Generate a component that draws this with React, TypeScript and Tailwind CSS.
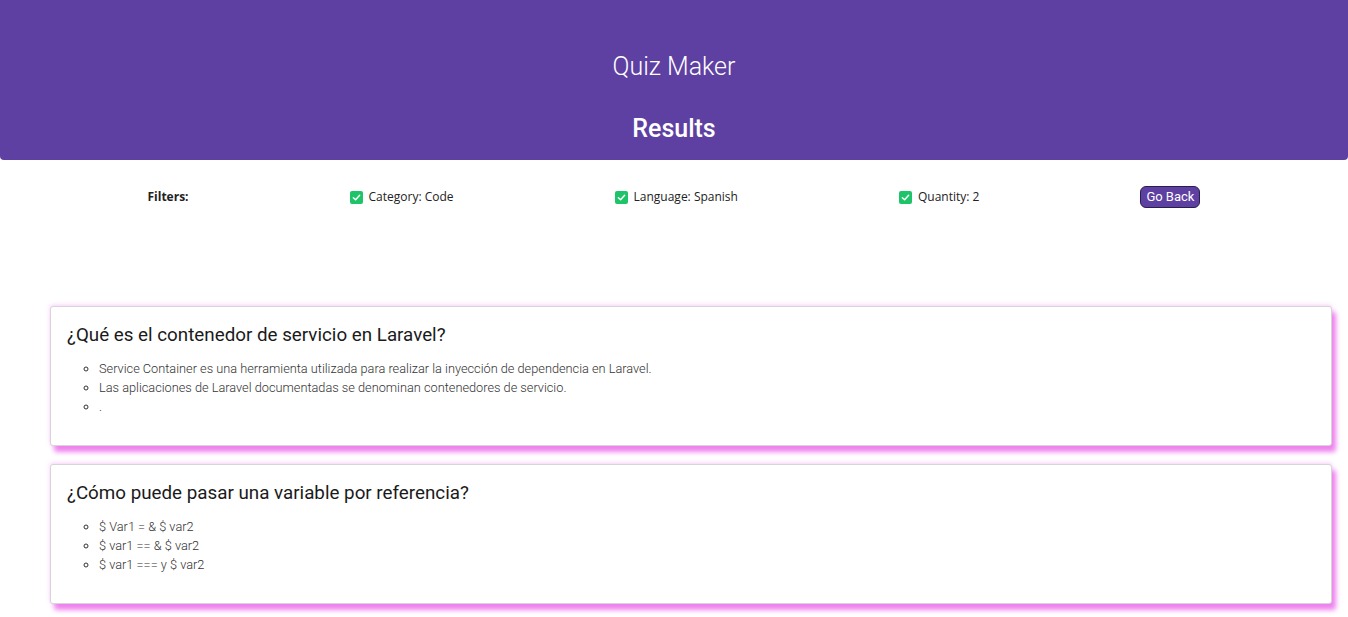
import React from "react";

const questions = [
  {
    title: "¿Qué es el contenedor de servicio en Laravel?",
    answers: [
      "Service Container es una herramienta utilizada para realizar la inyección de dependencia en Laravel.",
      "Las aplicaciones de Laravel documentadas se denominan contenedores de servicio.",
      ".",
    ],
  },
  {
    title: "¿Cómo puede pasar una variable por referencia?",
    answers: ["$ Var1 = & $ var2", "$ var1 == & $ var2", "$ var1 === y $ var2"],
  },
];

function Check() {
  return (
    <span className="inline-flex h-[13px] w-[13px] items-center justify-center rounded-[2px] bg-[#1fc46a]">
      <svg width="9" height="9" viewBox="0 0 10 10" fill="none">
        <path d="M1.5 5.2 L4 7.5 L8.5 2.5" stroke="white" strokeWidth="1.6" strokeLinecap="round" strokeLinejoin="round" />
      </svg>
    </span>
  );
}

function Filter({ label }: { label: string }) {
  return (
    <div className="flex items-center gap-[6px]">
      <Check />
      <span>{label}</span>
    </div>
  );
}

export default function App() {
  return (
    <div className="min-h-[617px] bg-white font-['Roboto',sans-serif] text-[#222]">
      <header className="flex h-[160px] flex-col items-center rounded-b-[4px] bg-[#5e3fa2] text-white">
        <h1 className="mt-[50px] text-[25px] font-light leading-[34px]">Quiz Maker</h1>
        <h2 className="mt-[28px] text-[25px] font-medium leading-[34px]">Results</h2>
      </header>

      <div className="mx-[67px] mt-[27px] flex h-[20px] items-center justify-around font-['Open_Sans',sans-serif] text-[12px] text-[#222]">
        <span className="font-bold">Filters:</span>
        <Filter label="Category: Code" />
        <Filter label="Language: Spanish" />
        <Filter label="Quantity: 2" />
        <button className="h-[22px] rounded-[6px] border border-[#2a1f4a] bg-[#5e3fa2] px-[5px] font-['Roboto',sans-serif] text-[13px] leading-[20px] text-white">
          Go Back
        </button>
      </div>

      <main className="mx-[50px] mr-[16px] mt-[99px] flex flex-col gap-[18px]">
        {questions.map((q) => (
          <section
            key={q.title}
            className="h-[140px] rounded-[3px] border border-[#d6d6d6] bg-white px-[16px] pt-[14px] shadow-[4px_6px_5px_violet,0_-1px_4px_rgba(238,130,238,0.4)]"
          >
            <h3 className="text-[18.8px] font-normal leading-[28px] text-[#1a1a1a]">{q.title}</h3>
            <ul className="mt-[10px] list-[circle] pl-[32px] text-[12.75px] font-light leading-[19px] text-[#333]">
              {q.answers.map((a) => (
                <li key={a}>{a}</li>
              ))}
            </ul>
          </section>
        ))}
      </main>
    </div>
  );
}
